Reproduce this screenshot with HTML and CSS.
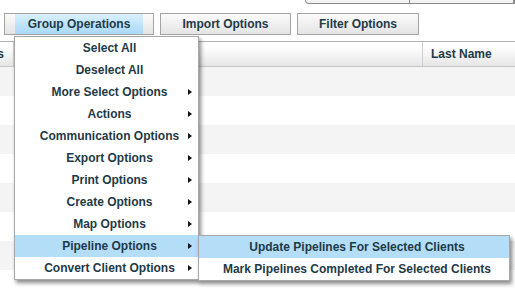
FILE: index.html
```html
<!DOCTYPE html>
<html lang="en">
<head>
    <meta charset="UTF-8">
    <title>Clients - Group Operations</title>
    <link rel="stylesheet" href="styles.css">
</head>
<body>
    <div class="tabs">
        <span class="tab"></span>
        <span class="tab"></span>
    </div>

    <div class="toolbar">
        <button class="btn btn-group"><span>Group Operations</span></button>
        <button class="btn btn-import">Import Options</button>
        <button class="btn btn-filter">Filter Options</button>
    </div>

    <div class="grid">
        <div class="grid-head">
            <div class="col col-clip">Tags</div>
            <div class="col col-main"></div>
            <div class="col col-last">Last Name</div>
        </div>
        <div class="grid-row"></div>
        <div class="grid-row"></div>
        <div class="grid-row"></div>
        <div class="grid-row"></div>
        <div class="grid-row"></div>
        <div class="grid-row"></div>
        <div class="grid-row"></div>
        <div class="grid-row"></div>
    </div>

    <!-- group operations dropdown -->
    <ul class="menu">
        <li class="menu-item">Select All</li>
        <li class="menu-item">Deselect All</li>
        <li class="menu-item has-sub">More Select Options</li>
        <li class="menu-item has-sub">Actions</li>
        <li class="menu-item has-sub">Communication Options</li>
        <li class="menu-item has-sub">Export Options</li>
        <li class="menu-item has-sub">Print Options</li>
        <li class="menu-item has-sub">Create Options</li>
        <li class="menu-item has-sub">Map Options</li>
        <li class="menu-item has-sub active">Pipeline Options
            <ul class="menu submenu">
                <li class="menu-item active">Update Pipelines For Selected Clients</li>
                <li class="menu-item">Mark Pipelines Completed For Selected Clients</li>
            </ul>
        </li>
        <li class="menu-item has-sub">Convert Client Options</li>
    </ul>
</body>
</html>
```

FILE: styles.css
```css
* {
    margin: 0;
    padding: 0;
    box-sizing: border-box;
}

body {
    font-family: 'Liberation Sans', Arial, sans-serif;
    font-size: 12px;
    font-weight: bold;
    color: #1f3a47;
    background: white;
    width: 515px;
    height: 299px;
    overflow: hidden;
    position: relative;
}

/* tab strip peeking in from the top */
.tabs {
    display: flex;
    margin-left: 305px;
    height: 4px;
    border: 1px solid #8a8a8a;
    border-top: none;
    border-radius: 0 0 0 5px;
    background: #f2f2f2;
}

.tab {
    width: 124px;
    border-right: 1px solid #8a8a8a;
}

.toolbar {
    display: flex;
    gap: 6px;
    padding-left: 4px;
    margin-top: 9px;
}

.btn {
    height: 22px;
    border: 1px solid #a3a3a3;
    background: linear-gradient(#fbfbfb, #e4e4e4);
    font-family: inherit;
    font-size: 12px;
    font-weight: bold;
    color: #1f3a47;
}

.btn-group {
    width: 150px;
    padding: 0 10px;
    display: flex;
}

.btn-group span {
    flex: 1;
    display: flex;
    align-items: center;
    justify-content: center;
    background: linear-gradient(#d9f0fd, #a9d9f8);
}

.btn-import {
    width: 131px;
}

.btn-filter {
    width: 122px;
}

.grid {
    margin-top: 6px;
}

.grid-head {
    display: flex;
    height: 26px;
    border-top: 1px solid #b2b2b2;
    border-bottom: 1px solid #c6c6c6;
    background: linear-gradient(#ffffff 20%, #e6e6e6);
}

.col {
    display: flex;
    align-items: center;
}

.col-clip {
    width: 14px;
    overflow: hidden;
    justify-content: flex-end;
    padding-right: 9px;
    border-right: 1px solid #cfcfcf;
}

.col-main {
    width: 409px;
    border-right: 1px solid #cfcfcf;
}

.col-last {
    flex: 1;
    padding-left: 8px;
}

.grid-row {
    height: 29px;
}

.grid-row:nth-child(even) {
    background: #f4f4f4;
}

/* dropdown menus */
.menu {
    list-style: none;
    position: absolute;
    left: 14px;
    top: 36px;
    width: 185px;
    background: white;
    border: 1px solid #a8a8a8;
    box-shadow: 2px 3px 4px rgba(0, 0, 0, 0.45);
}

.menu-item {
    position: relative;
    height: 22px;
    line-height: 22px;
    padding-left: 6px;
    text-align: center;
    white-space: nowrap;
}

.menu-item.active {
    background: #b4ddf8;
}

.has-sub::after {
    content: '';
    position: absolute;
    left: 173px;
    top: 8px;
    border-left: 4px solid #111;
    border-top: 3.5px solid transparent;
    border-bottom: 3.5px solid transparent;
}

.submenu {
    left: 183px;
    top: 0;
    width: 312px;
}
```
